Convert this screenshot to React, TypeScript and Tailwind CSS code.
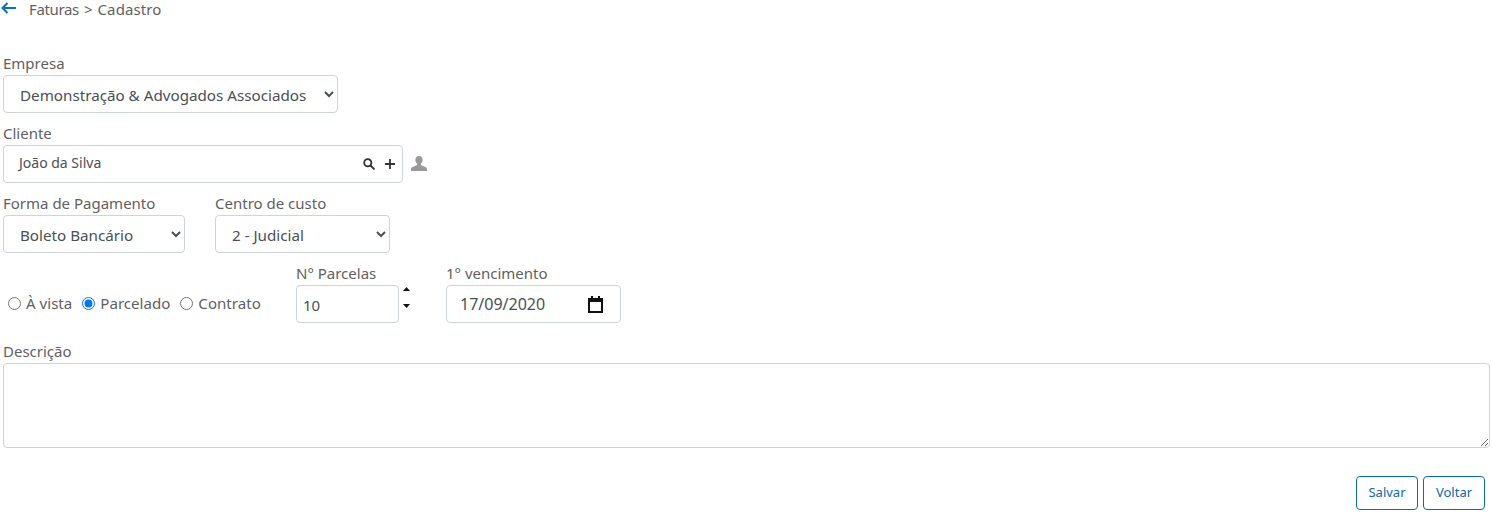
import { useState } from "react"

const inputClass = "h-[38px] rounded border border-[#ced4da] bg-white text-[#495057] outline-none"

function Label({ children }: { children: React.ReactNode }) {
    return <label className="block h-[24px] leading-[24px] text-[#5f5f5f]">{children}</label>
}

function Radio({ label, checked, onChange }: { label: string; checked: boolean; onChange: () => void }) {
    return (
        <label className="flex items-center gap-[5px] text-[15.1px] leading-[20px] text-[#5f5f5f]">
            <input type="radio" name="tipo" checked={checked} onChange={onChange} className="m-0 h-[13px] w-[13px]" />
            {label}
        </label>
    )
}

export default function App() {
    const [tipo, setTipo] = useState("parcelado")

    return (
        <div className="h-[512px] overflow-hidden bg-white px-[3px] text-[15px] font-['Noto_Sans',sans-serif]">
            <div className="flex h-[51px] items-start text-[#5f5f5f]">
                <svg width="15" height="12" viewBox="0 0 15 12" className="mt-[2px] -ml-[2px]" fill="none" stroke="#0a74b8" strokeWidth="2">
                    <path d="M15 6H1.500M6.500 1 1.500 6l5 5" />
                </svg>
                <span className="ml-[13px] leading-[19px] tracking-[-0.35px]">Faturas</span>
                <span className="ml-[5px] leading-[19px]">&gt;</span>
                <span className="ml-[5px] leading-[19px] tracking-[0.1px]">Cadastro</span>
            </div>

            <Label>Empresa</Label>
            <select className={`${inputClass} w-[335px] pl-[12px] pt-[2px] text-[15.2px]`} defaultValue="1">
                <option value="1">Demonstração &amp; Advogados Associados</option>
            </select>

            <div className="mt-[8px]">
                <Label>Cliente</Label>
                <div className="flex items-center">
                    <div className={`${inputClass} flex w-[400px] items-center justify-between pb-[3px] pl-[15px] pr-[7px] text-[14px] text-[#5a6268]`}>
                        <span>João da Silva</span>
                        <div className="flex items-center gap-[10px] pt-[3px]">
                            <svg width="12" height="12" viewBox="0 0 12 12" fill="none" stroke="#333" strokeWidth="1.800">
                                <circle cx="4.800" cy="4.800" r="3.600" />
                                <path d="m7.500 7.500 4 4" />
                            </svg>
                            <svg width="10" height="10" viewBox="0 0 11 11" fill="none" stroke="#333" strokeWidth="2">
                                <path d="M5.500 0v11M0 5.500h11" />
                            </svg>
                        </div>
                    </div>
                    <svg width="16" height="15" viewBox="0 0 16 15" fill="#999" className="ml-[8px] -mt-[2px]">
                        <path d="M8 0c2.200 0 3.600 1.700 3.600 3.900 0 1.600-.7 3-1.700 3.800v1.200l4.300 2c.9.4 1.800 1 1.800 2V15H0v-2.100c0-1 .9-1.600 1.800-2l4.300-2V7.700C5.100 6.900 4.400 5.500 4.400 3.900 4.400 1.700 5.800 0 8 0Z" />
                    </svg>
                </div>
            </div>

            <div className="mt-[8px] flex gap-[30px]">
                <div>
                    <Label>Forma de Pagamento</Label>
                    <select className={`${inputClass} w-[182px] pl-[12px] pt-[2px] text-[15.2px]`} defaultValue="b">
                        <option value="b">Boleto Bancário</option>
                    </select>
                </div>
                <div>
                    <Label>Centro de custo</Label>
                    <select className={`${inputClass} w-[175px] pl-[12px] pt-[2px] text-[15.2px]`} defaultValue="2">
                        <option value="2">2 - Judicial</option>
                    </select>
                </div>
            </div>

            <div className="mt-[8px] flex items-end">
                <div className="flex h-[38px] w-[293px] items-center gap-[10px] pb-[2px] pl-[5px]">
                    <Radio label="À vista" checked={tipo === "vista"} onChange={() => setTipo("vista")} />
                    <Radio label="Parcelado" checked={tipo === "parcelado"} onChange={() => setTipo("parcelado")} />
                    <Radio label="Contrato" checked={tipo === "contrato"} onChange={() => setTipo("contrato")} />
                </div>
                <div>
                    <Label>N° Parcelas</Label>
                    <div className="flex">
                        <div className={`${inputClass} flex w-[103px] items-center pl-[6px] pt-[2px]`}>10</div>
                        <div className="ml-[4px] flex h-[23px] flex-col justify-between pt-[2px]">
                            <svg width="7" height="4" viewBox="0 0 9 5" fill="#111"><path d="M4.500 0 9 5H0Z" /></svg>
                            <svg width="7" height="4" viewBox="0 0 9 5" fill="#111"><path d="M0 0h9L4.500 5Z" /></svg>
                        </div>
                    </div>
                </div>
                <div className="ml-[36px]">
                    <Label>1° vencimento</Label>
                    <div className={`${inputClass} flex w-[175px] items-center justify-between pl-[13px] pr-[16px] text-[16px]`}>
                        <span>17/09/2020</span>
                        <svg width="17" height="17" viewBox="0 0 17 17" fill="none" stroke="#111" strokeWidth="2">
                            <path d="M2 3h13v13H2z" />
                            <path d="M1 4.500h15" strokeWidth="3" />
                            <path d="M5 0v3M12 0v3" />
                        </svg>
                    </div>
                </div>
            </div>

            <div className="mt-[16px]">
                <Label>Descrição</Label>
                <textarea className="block h-[85px] w-[1487px] rounded border border-[#ced4da] bg-white outline-none" />
            </div>

            <div className="mt-[28px] flex justify-end gap-[5px] pr-[4px]">
                <button className="h-[34px] w-[62px] rounded border border-[#0a6ab0] text-[13px] text-[#0a6ab0]">Salvar</button>
                <button className="h-[34px] w-[62px] rounded border border-[#0a6ab0] text-[13px] text-[#0a6ab0]">Voltar</button>
            </div>
        </div>
    )
}
